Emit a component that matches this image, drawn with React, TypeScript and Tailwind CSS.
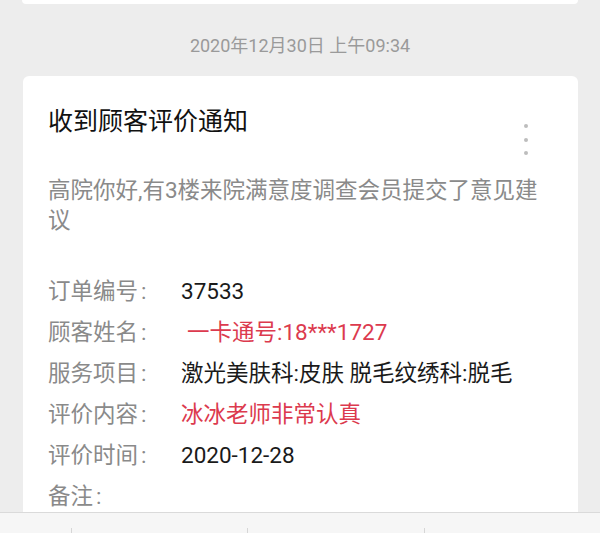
import React from "react";

const rows: { label: string; value: string; red?: boolean; indent?: boolean }[] = [
  { label: "订单编号", value: "37533" },
  { label: "顾客姓名", value: "一卡通号:18***1727", red: true, indent: true },
  { label: "服务项目", value: "激光美肤科:皮肤 脱毛纹绣科:脱毛" },
  { label: "评价内容", value: "冰冰老师非常认真", red: true },
  { label: "评价时间", value: "2020-12-28" },
  { label: "备注", value: "" },
];

export default function App() {
  return (
    <div
      className="w-full h-[533px] bg-[#ededed] overflow-hidden flex flex-col"
      style={{ fontFamily: 'Roboto, "Noto Sans CJK SC", sans-serif' }}
    >
      <div className="ml-[22px] mr-[22px] h-[4px] bg-white rounded-b-[6px] shrink-0" />
      <div className="mt-[32px] h-[20px] leading-[20px] text-center text-[18px] text-[#9a9a9a] shrink-0">
        2020年12月30日 上午09:34
      </div>
      <div className="mt-[20px] ml-[23px] mr-[22px] flex-1 min-h-0 bg-white rounded-t-[6px] relative px-[25px] overflow-hidden">
        <div className="absolute right-[50px] top-[48px] flex flex-col gap-[9.5px]">
          <span className="block w-[4px] h-[4px] rounded-full bg-[#bdbdbd]" />
          <span className="block w-[4px] h-[4px] rounded-full bg-[#bdbdbd]" />
          <span className="block w-[4px] h-[4px] rounded-full bg-[#bdbdbd]" />
        </div>
        <div className="pt-[30px] text-[25px] leading-[32px] text-[#111111]">收到顾客评价通知</div>
        <div className="mt-[37px] text-[22.5px] leading-[30px] text-[#8a8a8a] pr-[2px]">
          高院你好,有3楼来院满意度调查会员提交了意见建议
        </div>
        <div className="mt-[36px] flex flex-col">
          {rows.map((r) => (
            <div key={r.label} className="flex h-[41px] items-center text-[22.5px] leading-[41px] whitespace-nowrap">
              <div className="w-[133px] shrink-0 text-[#8a8a8a]">
                {r.label}
                <span className="ml-[3px]">:</span>
              </div>
              <div
                className={
                  (r.red ? "text-[#dc3a4e] " : "text-[#1a1a1a] ") + (r.indent ? "pl-[6px]" : "")
                }
              >
                {r.value}
              </div>
            </div>
          ))}
        </div>
      </div>
      <div className="h-[21px] shrink-0 bg-[#f6f6f6] border-t border-[#dadada] flex">
        <div className="w-[71px] shrink-0" />
        <div className="flex-1 mt-[15px] border-l border-[#d6d6d6]" />
        <div className="flex-1 mt-[15px] border-l border-[#d6d6d6]" />
        <div className="flex-1 mt-[15px] border-l border-[#d6d6d6]" />
      </div>
    </div>
  );
}
